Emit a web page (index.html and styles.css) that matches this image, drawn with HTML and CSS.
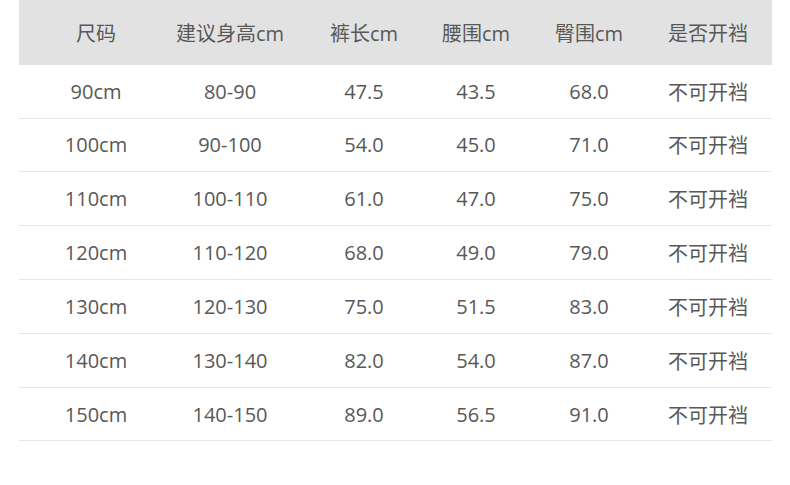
FILE: index.html
```html
<!DOCTYPE html>
<html lang="zh-CN">
<head>
<meta charset="utf-8">
<link rel="stylesheet" href="styles.css">
</head>
<body>
<div class="table">
  <div class="row head">
    <div>尺码</div><div>建议身高cm</div><div>裤长cm</div><div>腰围cm</div><div>臀围cm</div><div>是否开裆</div>
  </div>
  <div class="row"><div>90cm</div><div>80-90</div><div>47.5</div><div>43.5</div><div>68.0</div><div>不可开裆</div></div>
  <div class="row"><div>100cm</div><div>90-100</div><div>54.0</div><div>45.0</div><div>71.0</div><div>不可开裆</div></div>
  <div class="row"><div>110cm</div><div>100-110</div><div>61.0</div><div>47.0</div><div>75.0</div><div>不可开裆</div></div>
  <div class="row"><div>120cm</div><div>110-120</div><div>68.0</div><div>49.0</div><div>79.0</div><div>不可开裆</div></div>
  <div class="row"><div>130cm</div><div>120-130</div><div>75.0</div><div>51.5</div><div>83.0</div><div>不可开裆</div></div>
  <div class="row"><div>140cm</div><div>130-140</div><div>82.0</div><div>54.0</div><div>87.0</div><div>不可开裆</div></div>
  <div class="row"><div>150cm</div><div>140-150</div><div>89.0</div><div>56.5</div><div>91.0</div><div>不可开裆</div></div>
</div>
</body>
</html>
```

FILE: styles.css
```css
html, body {
  margin: 0;
  padding: 0;
  background: #ffffff;
}
body {
  font-family: "Open Sans", "Noto Sans CJK SC", sans-serif;
  font-size: 20px;
  color: #585858;
}
.table {
  margin-left: 19px;
  width: 753px;
}
.row {
  display: grid;
  grid-template-columns: 154px 114px 154px 70px 156px 82px;
  align-items: center;
  height: 52.84px;
  border-bottom: 1px solid #e6e6e6;
}
.row > div {
  text-align: center;
  white-space: nowrap;
}
.head {
  height: 64.7px;
  background: #e2e2e2;
  border-bottom: none;
}
```
